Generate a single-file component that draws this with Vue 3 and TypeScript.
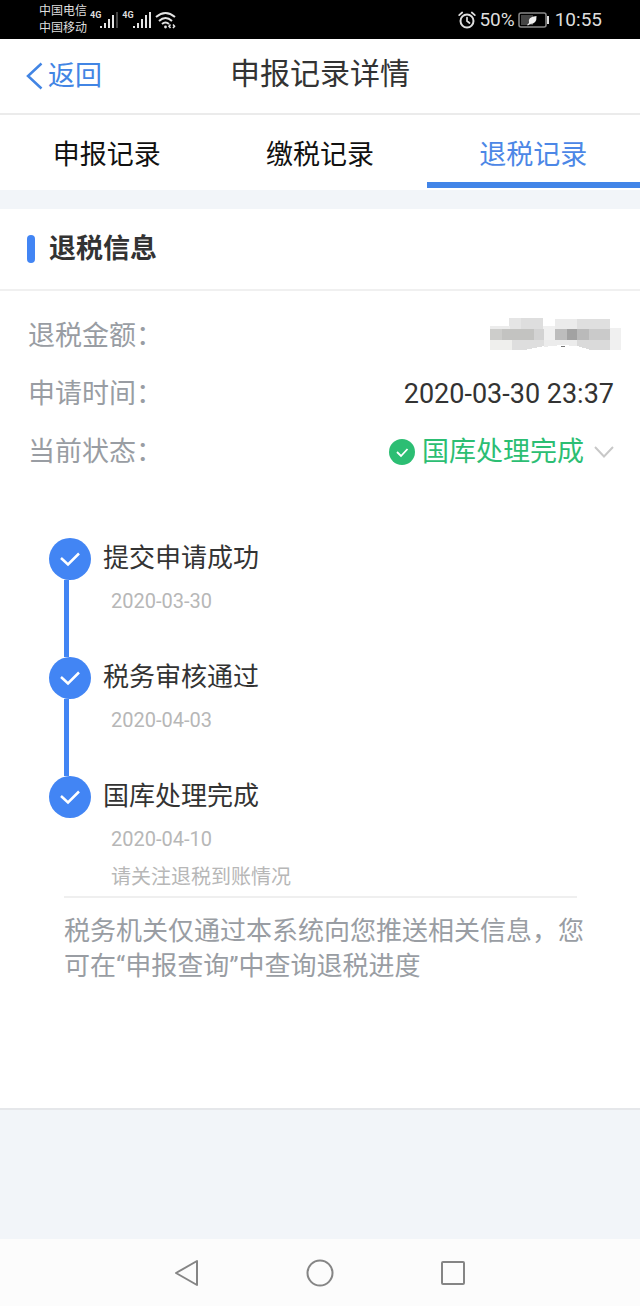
<script setup lang="ts">
import { ref } from 'vue'

interface Step {
  title: string
  date: string
  note?: string
}

const tabs: string[] = ['申报记录', '缴税记录', '退税记录']
const activeTab = ref<number>(2)

const steps: Step[] = [
  { title: '提交申请成功', date: '2020-03-30' },
  { title: '税务审核通过', date: '2020-04-03' },
  { title: '国库处理完成', date: '2020-04-10', note: '请关注退税到账情况' },
]
const expanded = ref<boolean>(true)
</script>

<template>
  <div class="screen">
    <div class="status-bar">
      <div class="carriers">
        <span>中国电信</span>
        <span>中国移动</span>
      </div>
      <div class="signal">
        <span class="net">4G</span>
        <svg width="20" height="18" viewBox="0 0 20 18" fill="#e4e4e4">
          <rect x="1" y="15" width="2" height="2" />
          <rect x="5" y="12" width="2" height="5" />
          <rect x="9" y="8" width="2" height="9" />
          <rect x="13" y="4" width="2" height="13" />
          <rect x="17" y="1" width="2" height="16" fill="#444" />
        </svg>
      </div>
      <div class="signal">
        <span class="net">4G</span>
        <svg width="20" height="18" viewBox="0 0 20 18" fill="#e4e4e4">
          <rect x="1" y="15" width="2" height="2" />
          <rect x="5" y="12" width="2" height="5" />
          <rect x="9" y="8" width="2" height="9" />
          <rect x="13" y="4" width="2" height="13" />
          <rect x="17" y="1" width="2" height="16" />
        </svg>
      </div>
      <svg class="wifi" width="22" height="18" viewBox="0 0 22 18" fill="none" stroke="#e4e4e4" stroke-width="2">
        <path d="M1 6Q10.500 -2 20 6" />
        <path d="M4 10Q10.500 4 17 10" />
        <path d="M7 13Q10.500 10 14 13" />
        <circle cx="10.500" cy="16" r="1.400" fill="#e4e4e4" stroke="none" />
        <path d="M15.500 13.500L14 15.200L15.500 17M18 13.500L19.500 15.200L18 17" stroke-width="1.600" />
      </svg>
      <div class="status-right">
        <svg width="18" height="18" viewBox="0 0 18 18" fill="none" stroke="#dedede" stroke-width="2" stroke-linecap="round">
          <circle cx="9" cy="10" r="6.500" />
          <path d="M9 6.500V10L11.500 12M1.200 4.200L4.200 1.500M13.800 1.500L16.800 4.200" stroke-width="1.700" />
        </svg>
        <span>50%</span>
        <svg width="32" height="16" viewBox="0 0 32 16">
          <rect x="1" y="1" width="27" height="14" rx="2" fill="none" stroke="#898989" stroke-width="1.500" />
          <rect x="3" y="3" width="12" height="10" fill="#444" />
          <rect x="29" y="4" width="2" height="8" fill="#ddd" />
          <path d="M9 13L11 11Q9 5 18.500 4Q19 12 12 12L10 13.500Z" fill="#eee" />
        </svg>
        <span class="clock">10:55</span>
      </div>
    </div>

    <header class="title-bar">
      <button class="back" type="button">
        <svg width="17" height="28" viewBox="0 0 17 28" fill="none" stroke="#4285e4" stroke-width="2.500">
          <path d="M15.500 1.500L2 14L15.500 26.500" />
        </svg>
        <span>返回</span>
      </button>
      <h1>申报记录详情</h1>
    </header>

    <nav class="tabs">
      <button
        v-for="(tab, i) in tabs"
        :key="tab"
        type="button"
        class="tab"
        :class="{ active: i === activeTab }"
        @click="activeTab = i"
      >{{ tab }}</button>
    </nav>

    <main class="card">
      <h2 class="section-title"><i class="marker"></i>退税信息</h2>
      <dl class="info">
        <div class="row">
          <dt>退税金额：</dt>
          <dd class="amount">
            <svg width="136" height="36" viewBox="0 0 136 36" shape-rendering="crispEdges">
              <rect x="23" y="0" width="34" height="12" fill="#e5e5e5" />
              <rect x="35" y="0" width="22" height="12" fill="#dedede" />
              <rect x="4" y="8" width="20" height="4" fill="#ececec" />
              <rect x="57" y="8" width="12" height="20" fill="#f0f0f0" />
              <rect x="69" y="1" width="22" height="11" fill="#ebebeb" />
              <rect x="91" y="1" width="33" height="11" fill="#dfdfdf" />
              <rect x="4" y="11" width="12" height="11" fill="#cdcdcb" />
              <rect x="16" y="11" width="32" height="11" fill="#c3c3c1" />
              <rect x="48" y="11" width="10" height="11" fill="#d3d3d3" />
              <rect x="69" y="11" width="12" height="11" fill="#bdbdbd" />
              <rect x="81" y="11" width="10" height="11" fill="#a2a2a2" />
              <rect x="91" y="11" width="12" height="11" fill="#bababa" />
              <rect x="103" y="11" width="21" height="11" fill="#cacaca" />
              <rect x="124" y="10" width="11" height="22" fill="#f0f0f0" />
              <rect x="4" y="22" width="22" height="10" fill="#efefed" />
              <path d="M26 22H58V28L38 32H26Z" fill="#dedede" />
              <path d="M58 22H91V28L75 27L58 29Z" fill="#ececec" />
              <path d="M91 22H124V32H105L91 28Z" fill="#dadada" />
              <path d="M75 28H79V29H75Z" fill="#777" />
            </svg>
          </dd>
        </div>
        <div class="row">
          <dt>申请时间：</dt>
          <dd>2020-03-30 23:37</dd>
        </div>
        <div class="row">
          <dt>当前状态：</dt>
          <dd>
            <button class="state" type="button" :aria-expanded="expanded" @click="expanded = !expanded">
              <svg width="26" height="26" viewBox="0 0 26 26">
                <circle cx="13" cy="13" r="13" fill="#2cbe73" />
                <path d="M8 13L12 17L18.500 10" fill="none" stroke="#fff" stroke-width="1.800" />
              </svg>
              <span>国库处理完成</span>
              <svg width="20" height="12" viewBox="0 0 20 12" fill="none" stroke="#c8c8c8" stroke-width="2">
                <path d="M1 1L10 10.500L19 1" />
              </svg>
            </button>
          </dd>
        </div>
      </dl>

      <section v-show="expanded" class="progress">
        <ol class="steps">
          <li v-for="step in steps" :key="step.title" class="step">
            <div class="rail">
              <svg width="42" height="42" viewBox="0 0 42 42">
                <circle cx="21" cy="21" r="21" fill="#4285f4" />
                <path d="M12 20L19 26.500L30 15.500" fill="none" stroke="#fff" stroke-width="2.500" />
              </svg>
              <i class="line"></i>
            </div>
            <div class="detail">
              <h3>{{ step.title }}</h3>
              <time :datetime="step.date">{{ step.date }}</time>
              <p v-if="step.note">{{ step.note }}</p>
            </div>
          </li>
        </ol>
        <hr class="divider" />
        <p class="notice">税务机关仅通过本系统向您推送相关信息，您可在“申报查询”中查询退税进度</p>
      </section>
    </main>

    <div class="system-nav">
      <button type="button" aria-label="返回上一页">
        <svg width="28" height="28" viewBox="0 0 28 28" fill="none" stroke="#858585" stroke-width="2" stroke-linejoin="round">
          <path d="M24 2V26L3 14Z" />
        </svg>
      </button>
      <button type="button" aria-label="主屏幕">
        <svg width="28" height="28" viewBox="0 0 28 28" fill="none" stroke="#858585" stroke-width="2">
          <circle cx="14" cy="14" r="12.500" />
        </svg>
      </button>
      <button type="button" aria-label="最近任务">
        <svg width="28" height="28" viewBox="0 0 28 28" fill="none" stroke="#858585" stroke-width="2">
          <rect x="3" y="3" width="22" height="22" rx="1" />
        </svg>
      </button>
    </div>
  </div>
</template>

<style>
body {
  margin: 0;
  background: #f2f5f9;
}
</style>

<style scoped>
.screen {
  display: flex;
  flex-direction: column;
  min-height: 100vh;
  background: #f2f5f9;
  color: #333;
  font-family: Roboto, "Noto Sans CJK SC", sans-serif;
}
button {
  padding: 0;
  border: 0;
  background: none;
  color: inherit;
  font: inherit;
  cursor: pointer;
}
h1, h2, h3, p, dl, dd, ol {
  margin: 0;
  padding: 0;
  font-weight: 400;
}
svg {
  display: block;
  flex: none;
}
.status-bar {
  display: flex;
  align-items: center;
  height: 39px;
  padding: 0 38px 0 39px;
  background: #000;
  color: #dedede;
}
.carriers {
  display: flex;
  flex-direction: column;
  font-size: 12px;
  line-height: 17px;
}
.signal {
  display: flex;
  align-items: center;
  margin-left: 3px;
}
.net {
  align-self: flex-start;
  margin-right: -2px;
  font-size: 9px;
  font-weight: 700;
  line-height: 8px;
}
.wifi {
  margin-left: 3px;
}
.status-right {
  display: flex;
  align-items: center;
  gap: 3px;
  margin-left: auto;
  font-size: 19px;
  line-height: 24px;
}
.clock {
  margin-left: 2px;
}
.title-bar {
  display: grid;
  grid-template-columns: 1fr auto 1fr;
  align-items: center;
  height: 74px;
  padding: 0 26px;
  border-bottom: 2px solid #ebebeb;
  background: #fff;
}
.back {
  display: flex;
  align-items: center;
  gap: 5px;
  color: #4285e4;
  font-size: 27px;
  line-height: 40px;
}
h1 {
  grid-column: 2;
  padding-bottom: 4px;
  font-size: 30px;
  line-height: 44px;
}
.tabs {
  display: grid;
  grid-template-columns: repeat(3, 1fr);
  height: 75px;
  margin-bottom: 19px;
  background: #fff;
}
.tab {
  box-sizing: border-box;
  height: 73px;
  border-bottom: 6px solid transparent;
  padding-top: 7px;
  color: #111;
  font-size: 27px;
}
.tab.active {
  border-color: #4285e8;
  color: #4c87e6;
}
.card {
  padding-bottom: 124px;
  border-bottom: 2px solid #e5e7ea;
  background: #fff;
}
.section-title {
  display: flex;
  align-items: center;
  gap: 14px;
  height: 80px;
  padding-left: 27px;
  border-bottom: 2px solid #f0f0f0;
  font-size: 27px;
  font-weight: 700;
  line-height: 76px;
}
.marker {
  width: 8px;
  height: 28px;
  border-radius: 4px;
  background: #4285f4;
}
.info {
  padding: 16px 26px 0 28px;
  font-size: 27px;
  line-height: 40px;
}
.row {
  display: flex;
  align-items: center;
  justify-content: space-between;
  height: 58px;
}
.row dt {
  color: #999da3;
}
.amount {
  margin-right: -8px;
}
.state {
  display: flex;
  align-items: center;
  gap: 7px;
  color: #2cbe73;
}
.state span {
  margin-right: 3px;
}
.progress {
  padding: 57px 56px 0 49px;
}
.steps {
  list-style: none;
}
.step {
  display: flex;
  gap: 12px;
  min-height: 119px;
}
.step:last-child {
  min-height: 0;
}
.rail {
  display: flex;
  flex-direction: column;
}
.line {
  flex: 1;
  width: 5px;
  margin-left: 15px;
  background: #4285f4;
}
.step:last-child .line {
  display: none;
}
.detail h3 {
  font-size: 26px;
  line-height: 40px;
}
.detail time,
.detail p {
  display: block;
  padding-left: 8px;
  color: #b7b7b7;
  font-size: 20px;
  line-height: 38px;
}
.detail time {
  padding-top: 4px;
}
.divider {
  height: 2px;
  margin: 0 7px 0 15px;
  border: 0;
  background: #efefef;
}
.notice {
  margin-left: 15px;
  padding-top: 16px;
  color: #999da3;
  font-size: 26px;
  line-height: 35px;
}
.system-nav {
  display: flex;
  align-items: center;
  justify-content: center;
  gap: 105px;
  height: 67px;
  margin-top: auto;
  background: #fcfcfc;
}
</style>
